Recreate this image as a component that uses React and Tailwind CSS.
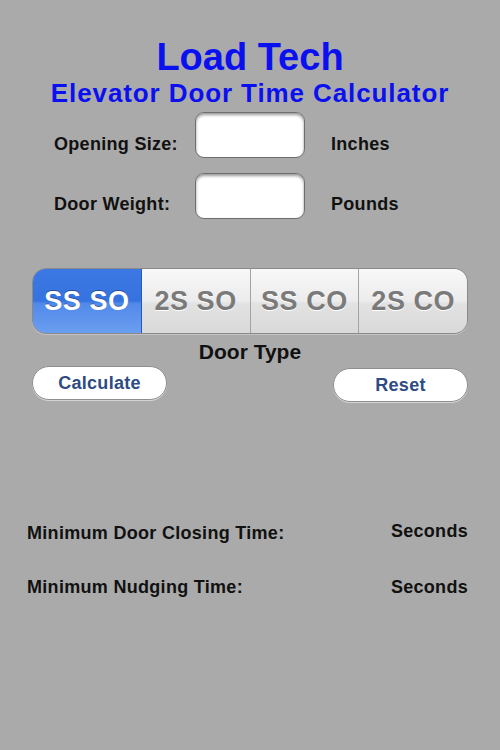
import React from 'react';

const SEGMENTS = ['SS SO', '2S SO', 'SS CO', '2S CO'];

const Field = ({ label, unit, labelTop }) => (
  <div className="flex items-start h-[46px]">
    <div className={`w-[195px] pl-[54px] text-[18px] leading-[20px] tracking-[0.3px] ${labelTop}`}>{label}</div>
    <div className="w-[110px] h-[46px] bg-white rounded-[9px] border border-[#6e6e6e] shadow-[inset_0_2px_3px_rgba(0,0,0,0.4)]" />
    <div className={`ml-[26px] text-[18px] leading-[20px] tracking-[0.3px] ${labelTop}`}>{unit}</div>
  </div>
);

const PillButton = ({ children, className }) => (
  <button
    className={`h-[34px] w-[135px] rounded-full bg-white border border-[#8e8e8e] text-[#2e4b84] text-[18px] font-bold tracking-[0.3px] shadow-[0_1px_0_rgba(255,255,255,0.5)] ${className}`}
  >
    {children}
  </button>
);

export default function App() {
  return (
    <div className="w-[500px] h-[750px] bg-[#aaaaaa] font-['Liberation_Sans',Arial,sans-serif] font-bold text-[#111]">
      <div className="pt-[37px] text-center text-[#0a10f0]">
        <h1 className="text-[38px] leading-[40px] font-bold">Load Tech</h1>
        <h2 className="mt-[2px] text-[26px] leading-[28px] tracking-[0.9px] font-bold">Elevator Door Time Calculator</h2>
      </div>

      <div className="mt-[5px] flex flex-col gap-[15px]">
        <Field label="Opening Size:" unit="Inches" labelTop="mt-[22px]" />
        <Field label="Door Weight:" unit="Pounds" labelTop="mt-[21px]" />
      </div>

      <div className="mx-[32px] mt-[49px] h-[66px] flex rounded-[14px] overflow-hidden border border-[#8a8a8a] shadow-[0_1px_0_rgba(255,255,255,0.3)]">
        {SEGMENTS.map((s, i) =>
          i === 0 ? (
            <div
              key={s}
              className="flex-1 flex items-center justify-center text-white text-[27px] tracking-[0.5px] border-r border-[#2a58b8] bg-[linear-gradient(to_bottom,#3c78e3_0%,#3673e0_50%,#528aea_54%,#6a9ef0_100%)] [text-shadow:0_-1px_0_rgba(0,0,0,0.35)]"
            >
              {s}
            </div>
          ) : (
            <div
              key={s}
              className={`flex-1 flex items-center justify-center text-[#7a7a7a] text-[27px] tracking-[0.5px] bg-[linear-gradient(to_bottom,#f8f8f8_0%,#ececec_50%,#e2e2e2_54%,#d9d9d9_100%)] [text-shadow:0_1px_0_#ffffff] ${i > 1 ? 'border-l border-[#a3a3a3]' : ''}`}
            >
              {s}
            </div>
          )
        )}
      </div>

      <div className="mt-[6px] text-center text-[21px] leading-[24px]">Door Type</div>

      <div className="mt-[2px] px-[32px] flex justify-between items-start">
        <PillButton>Calculate</PillButton>
        <PillButton className="mt-[2px] h-[33px]">Reset</PillButton>
      </div>

      <div className="mt-[121px] pl-[27px] pr-[32px] flex justify-between items-start text-[18px] leading-[20px] tracking-[0.3px]">
        <span>Minimum Door Closing Time:</span>
        <span className="-mt-[2px]">Seconds</span>
      </div>
      <div className="mt-[34px] pl-[27px] pr-[32px] flex justify-between items-start text-[18px] leading-[20px] tracking-[0.3px]">
        <span>Minimum Nudging Time:</span>
        <span>Seconds</span>
      </div>
    </div>
  );
}
